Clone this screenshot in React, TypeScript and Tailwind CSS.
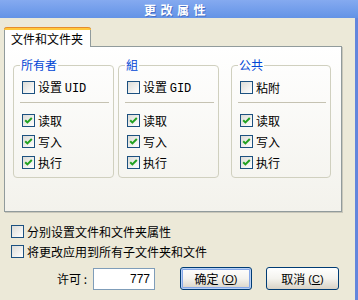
import React from "react";

const CJK = "font-['Noto_Sans_CJK_SC','Noto_Sans',sans-serif]";

function Box({ checked }: { checked?: boolean }) {
  return (
    <span className="w-[13px] h-[13px] border border-[#1c5180] bg-linear-to-br from-[#dcdcd7] to-white flex items-center justify-center shrink-0">
      {checked && (
        <svg width="11" height="11" viewBox="0 0 11 11">
          <path d="M2.2 5.2 L4.4 7.4 L8.8 3" stroke="#21a121" strokeWidth="2" fill="none" />
        </svg>
      )}
    </span>
  );
}

function Row({ checked, children, className = "" }: { checked?: boolean; children: React.ReactNode; className?: string }) {
  return (
    <div className={`flex items-center h-[13px] gap-[3px] ${className}`}>
      <Box checked={checked} />
      <span className="text-[12px] leading-[13px] whitespace-nowrap">{children}</span>
    </div>
  );
}

function Group({ title, first, w }: { title: string; first: React.ReactNode; w: string }) {
  return (
    <fieldset className={`border border-[#d0d0bf] rounded-[4px] px-[8px] pb-[8px] ${w}`}>
      <legend className="ml-[-2px] px-[1px] text-[12px] leading-[16px] text-[#0046d5]">{title}</legend>
      <Row className="mt-[8px]">{first}</Row>
      <div className="mt-[8px] h-[1px] bg-[#c5c2b2] ml-[-2px] mr-[-4px]" />
      <Row checked className="mt-[11px]">读取</Row>
      <Row checked className="mt-[8px]">写入</Row>
      <Row checked className="mt-[8px]">执行</Row>
    </fieldset>
  );
}

function Btn({ label, key2, def }: { label: string; key2: string; def?: boolean }) {
  return (
    <button
      className={`w-full h-[23px] rounded-[3px] border border-[#003c74] bg-linear-to-b from-white via-[#f4f3ee] to-[#d8d2c6] flex items-center justify-center text-[12px] leading-[14px] ${
        def ? "shadow-[inset_0_0_0_1px_#b8d0f5,inset_0_0_0_2px_#86a8e8]" : ""
      }`}
    >
      <span>{label}</span>
      <span className="ml-[3px] font-['Liberation_Sans',sans-serif] text-[11px]">
        (<span className="underline">{key2}</span>)
      </span>
    </button>
  );
}

export default function App() {
  return (
    <div className={`w-[358px] h-[300px] overflow-hidden bg-[#ece9d8] text-black ${CJK} flex flex-col`}>
      <div className="h-[18px] shrink-0 bg-linear-to-b from-[#85aaf0] to-[#6393e6] flex items-center justify-center pr-[4px]">
        <span className="text-white font-bold text-[12px] leading-[17px] tracking-[4.5px] [text-shadow:1px_1px_0_#4a6fc4]">更改属性</span>
      </div>
      <div className="flex flex-1">
        <div className="w-[355px] flex flex-col">
          <div className="ml-[4px] mt-[9px] w-[87px] h-[20px] relative z-10 -mb-px bg-white border-x border-[#919b9c] rounded-t-[3px] flex flex-col">
            <div className="h-[3px] -mx-px rounded-t-[3px] bg-[#ffc83c] border-t border-[#e68b2c]" />
            <div className="flex-1 flex items-center pl-[6px] text-[12px] leading-[14px] bg-white">文件和文件夹</div>
          </div>
          <div className="ml-[4px] w-[338px] h-[166px] border border-[#919b9c] bg-linear-to-b from-white to-[#f3f2ec] shadow-[1px_1px_0_#c9c7ba] pl-[8px] pt-[10px] flex items-start">
            <Group
              title="所有者"
              w="w-[101px]"
              first={
                <>
                  设置 <span className="font-['Liberation_Mono',monospace] text-[12px]">UID</span>
                </>
              }
            />
            <div className="w-[4px]" />
            <Group
              title="組"
              w="w-[101px]"
              first={
                <>
                  设置 <span className="font-['Liberation_Mono',monospace] text-[12px]">GID</span>
                </>
              }
            />
            <div className="w-[12px]" />
            <Group title="公共" w="w-[100px]" first="粘附" />
          </div>
          <Row className="ml-[11px] mt-[13px]">分别设置文件和文件夹属性</Row>
          <Row className="ml-[11px] mt-[7px]">将更改应用到所有子文件夹和文件</Row>
          <div className="mt-[9px] flex items-center h-[23px]">
            <span className="ml-[57px] w-[36px] text-[12px] leading-[14px]">许可 :</span>
            <div className="w-[62px] h-[22px] border border-[#7f9db9] bg-white flex items-center justify-end pr-[4px] text-[12px] font-['Liberation_Sans',sans-serif]">
              777
            </div>
            <div className="ml-[25px] w-[72px]">
              <Btn label="确定" key2="O" def />
            </div>
            <div className="ml-[14px] w-[73px]">
              <Btn label="取消" key2="C" />
            </div>
          </div>
        </div>
        <div className="w-[3px] bg-[#6386dc]" />
      </div>
    </div>
  );
}
